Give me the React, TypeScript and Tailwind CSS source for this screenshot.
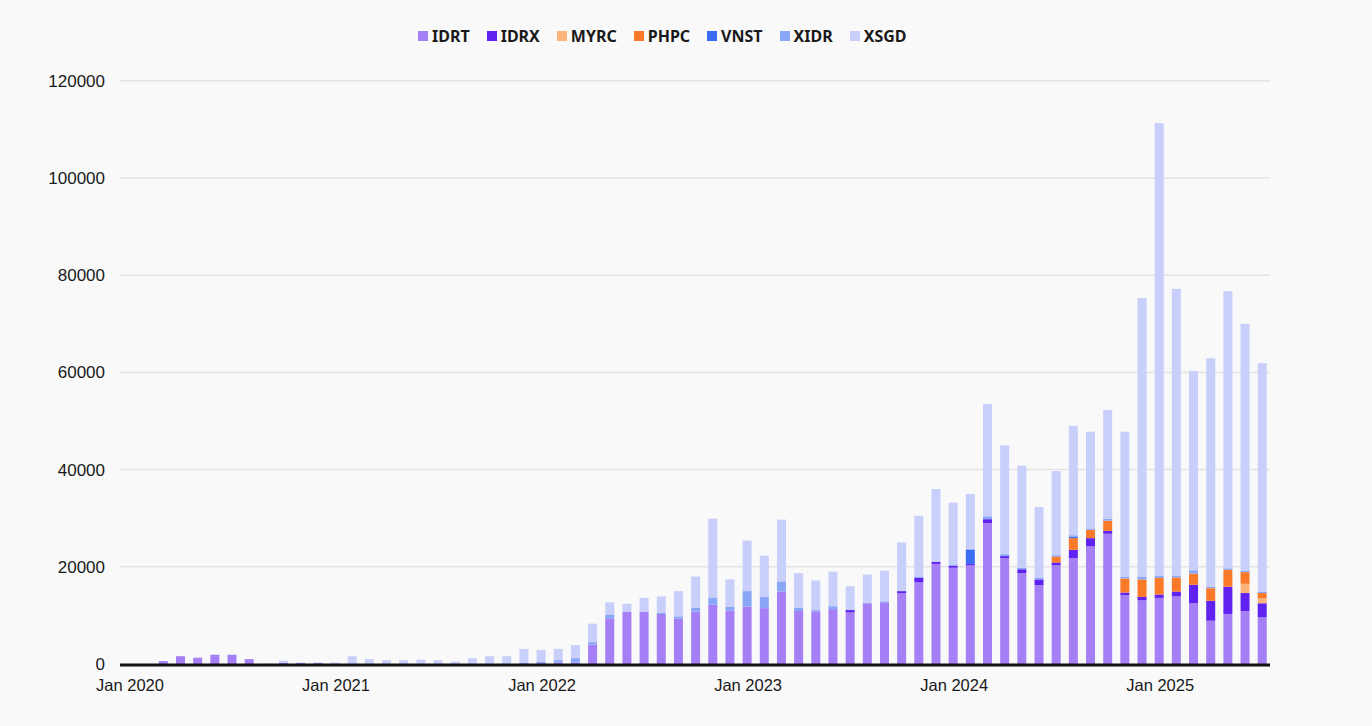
import React from "react";

const C = ["#a57ff5", "#5f22f0", "#fbb47a", "#fa7a2a", "#3b6cf5", "#8aa6f7", "#c8cffa"];
const SW = ["bg-[#a57ff5]", "bg-[#5f22f0]", "bg-[#fbb47a]", "bg-[#fa7a2a]", "bg-[#3b6cf5]", "bg-[#8aa6f7]", "bg-[#c8cffa]"];
const NAMES = ["IDRT", "IDRX", "MYRC", "PHPC", "VNST", "XIDR", "XSGD"];

// [idrt, idrx, myrc, phpc, vnst, xidr, xsgd] in thousands
const D: number[][] = [
  [0,0,0,0,0,0,0],[0,0,0,0,0,0,0],[0.6,0,0,0,0,0,0],[1.6,0,0,0,0,0,0],[1.3,0,0,0,0,0,0],
  [1.9,0,0,0,0,0,0],[1.9,0,0,0,0,0,0],[1.0,0,0,0,0,0,0],[0,0,0,0,0,0,0.1],[0.2,0,0,0,0,0,0.5],
  [0.2,0,0,0,0,0,0.1],[0.2,0,0,0,0,0,0.1],[0.1,0,0,0,0,0,0.2],[0,0,0,0,0,0,1.6],[0,0,0,0,0,0,1.0],
  [0,0,0,0,0,0,0.8],[0,0,0,0,0,0,0.8],[0,0,0,0,0,0,0.9],[0,0,0,0,0,0,0.8],[0,0,0,0,0,0,0.5],
  [0,0,0,0,0,0,1.2],[0,0,0,0,0,0,1.6],[0,0,0,0,0,0,1.6],[0,0,0,0,0,0.3,2.8],[0.2,0,0,0,0,0.3,2.4],
  [0.3,0,0,0,0,0.5,2.3],[0.3,0,0,0,0,0.9,2.7],[4.0,0,0,0,0,0.5,3.8],[9.4,0,0,0,0,0.8,2.5],[10.8,0,0,0,0,0,1.6],
  [10.8,0,0,0,0,0,2.8],[10.3,0,0,0,0,0.3,3.3],[9.3,0,0,0,0,0.5,5.2],[10.8,0,0,0,0,0.8,6.4],[12.2,0,0,0,0,1.5,16.2],
  [11.0,0,0,0,0,0.8,5.6],[11.8,0,0,0,0,3.2,10.4],[11.5,0,0,0,0,2.3,8.5],[14.9,0,0,0,0,2.1,12.7],[10.9,0,0,0,0,0.7,7.1],
  [10.8,0,0,0,0,0.3,6.1],[11.3,0,0,0,0,0.6,7.1],[10.6,0.5,0,0,0,0,4.9],[12.5,0,0,0,0,0.1,5.8],[12.7,0,0,0,0,0.2,6.3],
  [14.6,0.4,0,0,0,0,10],[16.8,0.9,0,0,0,0.3,12.5],[20.6,0.4,0,0,0,0,15],[19.8,0.4,0,0,0,0.3,12.7],[20.3,0.3,0,0,2.9,0.2,11.3],
  [29.0,0.8,0,0,0,0.6,23.1],[21.8,0.4,0,0,0,0.4,22.4],[18.7,0.8,0,0,0,0.3,21],[16.2,1.2,0,0,0,0.3,14.6],[20.3,0.6,0,1.2,0,0.3,17.3],
  [21.8,1.7,0,2.4,0.3,0.3,22.5],[24.2,1.7,0,1.7,0,0.3,19.9],[26.8,0.6,0,2.1,0,0.4,22.4],[14.2,0.5,0,2.9,0,0.3,29.9],[13.1,0.7,0,3.6,0,0.5,57.4],
  [13.6,0.7,0,3.4,0,0.4,93.2],[13.9,1.0,0,2.9,0,0.4,59],[12.5,3.8,0,2.3,0,0.7,41],[8.9,4.1,0,2.6,0,0.3,47],[10.3,5.6,0,3.5,0,0.3,57],
  [10.9,3.7,1.9,2.4,0,0.3,50.8],[9.6,2.9,1.0,1.1,0,0.3,47],
];

const BASE = 664;
const K = 4.86;
const xc = (i: number) => 129 + 17.17 * i;
const FF = "'Liberation Sans', Arial, sans-serif";

export default function App() {
  return (
    <div className="w-[1372px] h-[726px] bg-[#f9f9f9] overflow-hidden font-['Liberation_Sans',Arial,sans-serif]">
      <div className="h-[72px] flex items-center pl-[418px] gap-[17px] text-[16px] font-bold text-[#1a1a1a]">
        {NAMES.map((n, i) => (
          <div key={n} className="flex items-center gap-[4px]">
            <span className={"w-[10px] h-[10px] inline-block " + SW[i]} />
            <span>{n}</span>
          </div>
        ))}
      </div>
      <svg width={1372} height={654} viewBox="0 72 1372 654" className="block">
        {[0, 20000, 40000, 60000, 80000, 100000, 120000].map((v) => {
          const y = BASE - (v / 1000) * K;
          return (
            <g key={v}>
              {v > 0 && <line x1={120} x2={1270} y1={y} y2={y} stroke="#e4e4e4" strokeWidth={1.5} />}
              <text x={105} y={y + 6} textAnchor="end" fontSize={17} fill="#1a1a1a" fontFamily={FF}>{v}</text>
            </g>
          );
        })}
        {D.map((row, i) => {
          let acc = 0;
          return (
            <g key={i}>
              {row.map((v, j) => {
                if (v <= 0) return null;
                const h = v * K;
                const y = BASE - (acc + v) * K;
                acc += v;
                return <rect key={j} x={xc(i) - 4.5} y={y} width={9} height={h} fill={C[j]} />;
              })}
            </g>
          );
        })}
        <line x1={120} x2={1270} y1={665} y2={665} stroke="#111" strokeWidth={3} />
        {[0, 12, 24, 36, 48, 60].map((m, k) => (
          <text key={m} x={xc(m) + 1} y={691} textAnchor="middle" fontSize={16.5} fill="#1a1a1a" fontFamily={FF}>
            {"Jan " + (2020 + k)}
          </text>
        ))}
      </svg>
    </div>
  );
}
